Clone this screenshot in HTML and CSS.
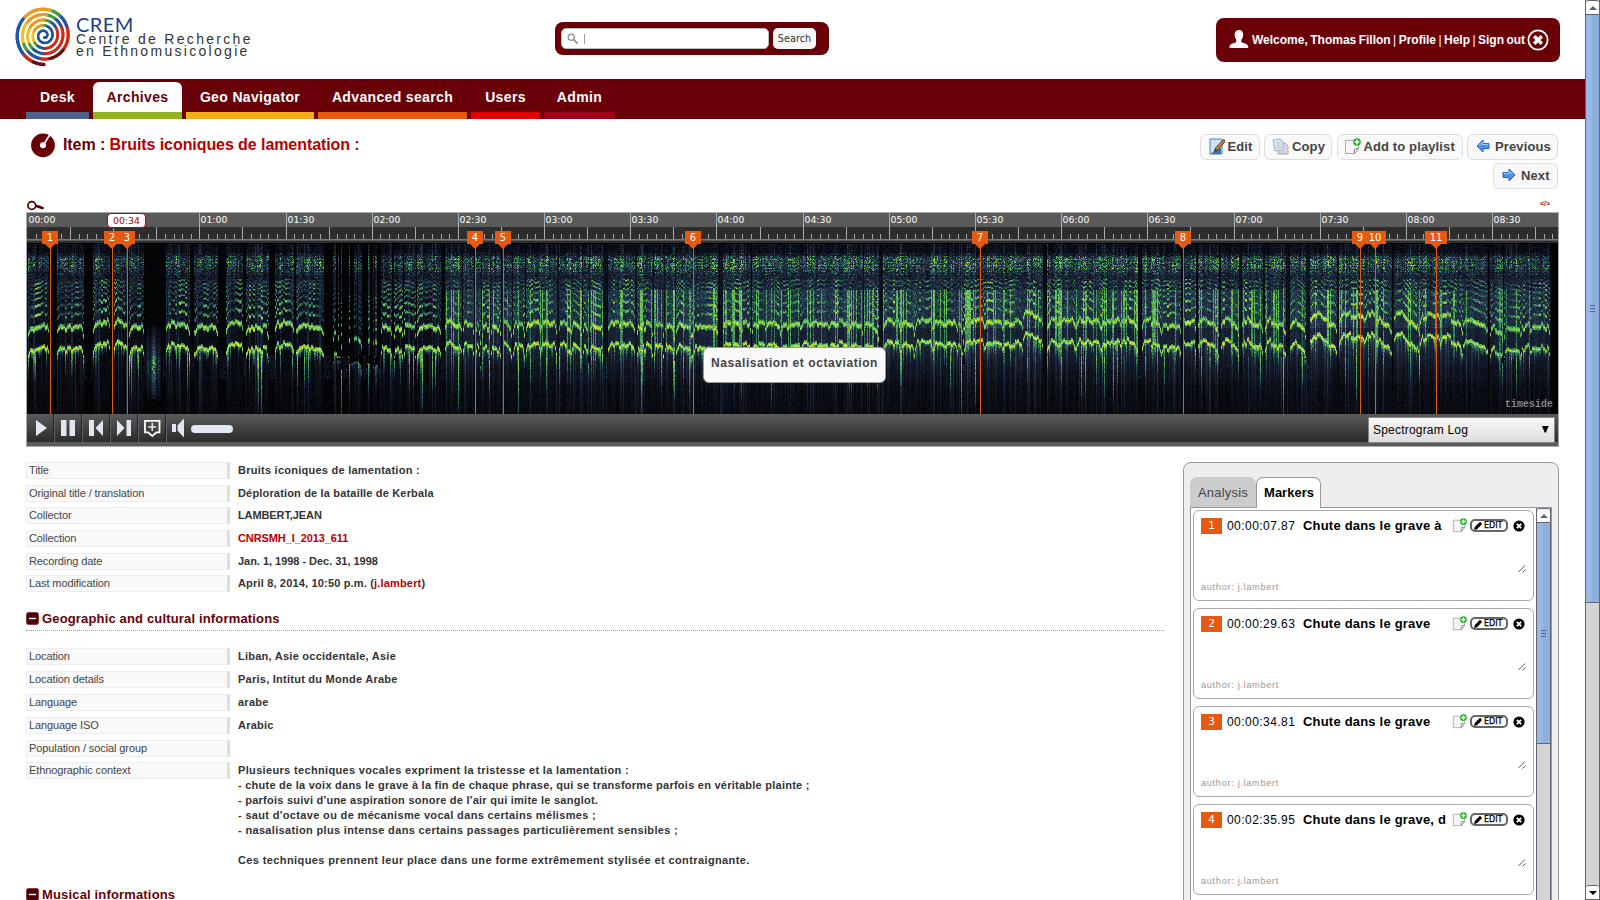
FILE: index.html
```html
<!DOCTYPE html>
<html lang="en">
<head>
<meta charset="utf-8">
<title>Bruits iconiques de lamentation - CREM</title>
<link rel="stylesheet" href="styles.css">
</head>
<body>
<svg class="defs" width="0" height="0" aria-hidden="true">
  <symbol id="i-pageplus" viewBox="0 0 17 17">
    <path d="M1.5 2.5h13v8l-4 5h-9z" fill="#f4f5f4" stroke="#aaa"/>
    <path d="M10.5 15.5v-4.5l4-.5z" fill="#fff" stroke="#888"/>
    <circle cx="13" cy="4" r="3.8" fill="#1fae1f"/>
    <path d="M13 1.6v4.8M10.6 4h4.8" stroke="#fff" stroke-width="1.6"/>
  </symbol>
  <symbol id="i-arrow" viewBox="0 0 14 14">
    <path d="M1 7l6-6v3.5h6v5H7V13z" fill="#4a94ee" stroke="#2a62b8" stroke-width="1"/>
    <path d="M3 6.6L6.2 3.4v2h6" stroke="#a8d0ff" fill="none"/>
  </symbol>
  <symbol id="i-minus" viewBox="0 0 13 13">
    <rect x=".5" y=".5" width="12" height="12" rx="2" fill="#4a0004" stroke="#8c3a3e"/>
    <path d="M3 6.5h7" stroke="#fff" stroke-width="1.4"/>
  </symbol>
</svg>
<div class="page">
  <header class="top">
    <div class="logo">
      <svg id="spiral" width="59" height="60" viewBox="0 0 59 60"></svg>
      <div class="logo-text">
        <div class="crem">CREM</div>
        <div class="sub">Centre de Recherche</div>
        <div class="sub">en Ethnomusicologie</div>
      </div>
    </div>
    <div class="search">
      <div class="search-input">
        <svg width="12" height="12" viewBox="0 0 12 12"><circle cx="4.3" cy="4.3" r="3.1" fill="none" stroke="#999" stroke-width="1.4"/><path d="M6.6 6.6l4 4" stroke="#999" stroke-width="2"/></svg>
        <span class="caret"></span>
      </div>
      <div class="search-btn">Search</div>
    </div>
    <div class="user">
      <svg width="20" height="19" viewBox="0 0 20 19"><path d="M10 0c3 0 4.300 2 4.200 5-.1 2.400-1.200 3.800-1.800 4.800v2.300c1.500 1.300 6.600 1.500 6.800 4.400V18H.5v-1.500c.2-2.900 5.300-3.100 6.800-4.400V9.800C6.700 8.800 5.700 7.400 5.600 5 5.500 2 7 0 10 0z" fill="#fff"/></svg>
      <span class="user-text"><b>Welcome, Thomas Fillon</b> | <b>Profile</b> | <b>Help</b> | <b>Sign out</b></span>
      <svg width="22" height="22" viewBox="0 0 22 22"><circle cx="11" cy="11" r="9.600" fill="none" stroke="#fff" stroke-width="1.800"/><path d="M7.200 7.200l7.600 7.600M14.800 7.200l-7.600 7.600" stroke="#fff" stroke-width="3.400"/></svg>
    </div>
  </header>
  <nav class="nav">
    <a class="tab desk">Desk</a><a class="tab archives">Archives</a><a class="tab geo">Geo Navigator</a><a class="tab adv">Advanced search</a><a class="tab users">Users</a><a class="tab admin">Admin</a>
  </nav>
  <div class="heading">
    <svg width="25" height="25" viewBox="0 0 25 25"><circle cx="12" cy="12.300" r="11.900" fill="#690007"/><path d="M13 11L19 1.500" stroke="#fff" stroke-width="1.500"/><path d="M18 0l5 3" stroke="#fff" stroke-width="1.500"/><circle cx="12" cy="12.300" r="3" fill="#fff"/></svg>
    <h1>Item : <span>Bruits iconiques de lamentation :</span></h1>
    <div class="actions">
      <a class="btn w-edit"><svg width="16" height="17" viewBox="0 0 16 17"><path d="M1 1h12v15H1z" fill="#cfe0f4" stroke="#5a80b8"/><path d="M12 10v6H1z" fill="#3f6cb4"/><path d="M14.800 1.500L7 9.500l-2 4 4-1.800 7-8z" fill="#c98a4a" stroke="#3a2a20" stroke-width="1"/></svg>Edit</a>
      <a class="btn w-copy"><svg width="17" height="17" viewBox="0 0 17 17"><path d="M6 5h7l3 3v8H6z" fill="#d9d4e0" stroke="#aaa3b5"/><path d="M1 2l7-1 3 2.500.5 8.500-8.500 1z" fill="#dde6ee" stroke="#a9b5c2"/><path d="M4 5l5-.6M4.300 7.500l5.500-.6M4.600 10l5.400-.6" stroke="#b4c2d2"/></svg>Copy</a>
      <a class="btn w-add"><svg width="17" height="17"><use href="#i-pageplus"/></svg>Add to playlist</a>
      <a class="btn w-prev"><svg width="14" height="14"><use href="#i-arrow"/></svg>Previous</a>
      <a class="btn w-next"><svg class="flip" width="14" height="14"><use href="#i-arrow"/></svg>Next</a>
    </div>
  </div>
  <div class="player-links">
    <svg width="18" height="11" viewBox="0 0 18 11"><circle cx="4.800" cy="5.500" r="3.900" fill="none" stroke="#4a0004" stroke-width="1.700"/><path d="M9.500 6l6 2" stroke="#4a0004" stroke-width="2.600" stroke-linecap="round"/></svg>
    <span class="embed">&lt;/&gt;</span>
  </div>
  <section class="player">
    <svg id="ruler" class="ruler" width="1531" height="31"></svg>
    <canvas id="spectro" width="1531" height="170"></canvas>
    <div id="marks" class="marks"></div>
    <div class="pointer">00:34</div>
    <div class="brand">timeside</div>
    <div class="tooltip">Nasalisation et octaviation</div>
    <div class="controls">
      <span class="ctl"><svg width="28" height="28"><path d="M9 6l11 8-11 8z" fill="#e2e8f2"/></svg></span>
      <span class="ctl"><svg width="28" height="28"><path d="M6 6h5.500v16H6zM14.500 6H20v16h-5.500z" fill="#e2e8f2"/></svg></span>
      <span class="ctl"><svg width="28" height="28"><path d="M6 6h5v16H6zM20 6v16l-7.500-8z" fill="#e2e8f2"/></svg></span>
      <span class="ctl"><svg width="28" height="28"><path d="M15.500 6H20v16h-4.500zM6 6v16l7.500-8z" fill="#e2e8f2"/></svg></span>
      <span class="ctl"><svg width="28" height="28"><path d="M6 6.800h14.500v11.500h-3l-4.200 3.700-4.300-3.700H6z" fill="none" stroke="#fff" stroke-width="1.800"/><path d="M13.300 9v8M9.300 13h8" stroke="#e2e8f2" stroke-width="1.600"/></svg></span>
      <span class="ctl last"><svg width="22" height="28"><path d="M5 10h4v8H5zM10.500 11.500L17 4.500v19l-6.500-7z" fill="#e2e8f2"/></svg></span>
      <span class="volume"></span>
      <span class="select">Spectrogram Log<svg width="7" height="7"><path d="M0 0h6.600L4 6.500H2.600z" fill="#000"/></svg></span>
    </div>
    <div class="player-foot"></div>
  </section>
  <div class="columns">
    <main class="info">
      <dl>
        <dt>Title</dt><dd>Bruits iconiques de lamentation :</dd>
        <dt>Original title / translation</dt><dd class="mid">Déploration de la bataille de Kerbala</dd>
        <dt>Collector</dt><dd class="caps">LAMBERT,JEAN</dd>
        <dt>Collection</dt><dd class="caps"><a>CNRSMH_I_2013_611</a></dd>
        <dt>Recording date</dt><dd class="date">Jan. 1, 1998 - Dec. 31, 1998</dd>
        <dt>Last modification</dt><dd class="mid">April 8, 2014, 10:50 p.m. (<a>j.lambert</a>)</dd>
      </dl>
      <h2><svg width="13" height="13"><use href="#i-minus"/></svg>Geographic and cultural informations</h2>
      <dl class="second">
        <dt>Location</dt><dd>Liban, Asie occidentale, Asie</dd>
        <dt>Location details</dt><dd>Paris, Intitut du Monde Arabe</dd>
        <dt>Language</dt><dd>arabe</dd>
        <dt>Language ISO</dt><dd>Arabic</dd>
        <dt>Population / social group</dt><dd></dd>
        <dt>Ethnographic context</dt><dd><span class="p1">Plusieurs techniques vocales expriment la tristesse et la lamentation :</span><br>- chute de la voix dans le grave à la fin de chaque phrase, qui se transforme parfois en véritable plainte ;<br>- parfois suivi d'une aspiration sonore de l'air qui imite le sanglot.<br><span class="p1">- saut d'octave ou de mécanisme vocal dans certains mélismes ;</span><br><span class="p1">- nasalisation plus intense dans certains passages particulièrement sensibles ;</span><br><br><span class="p2">Ces techniques prennent leur place dans une forme extrêmement stylisée et contraignante.</span></dd>
      </dl>
      <h2 class="musical"><svg width="13" height="13"><use href="#i-minus"/></svg>Musical informations</h2>
    </main>
    <aside class="side">
      <div class="side-tabs"><span class="st-a">Analysis</span><span class="st-m">Markers</span></div>
      <div class="side-body">
        <div id="cards" class="cards"></div>
        <div class="vbar inner"><span class="vbtn"><i class="up"></i></span><span class="thumb"><i class="grip"></i></span></div>
      </div>
    </aside>
  </div>
</div>
<div class="vbar outer"><span class="vbtn"><i class="up"></i></span><span class="thumb"><i class="grip"></i></span><span class="fill"></span><span class="vbtn"><i class="down"></i></span></div>
<script src="script.js"></script>
</body>
</html>
```

FILE: styles.css
```css
* { box-sizing: border-box; }
html, body { margin: 0; height: 900px; overflow: hidden; }
body { display: flex; background: #fff; font-family: "Liberation Sans", Arial, sans-serif; color: #333; }
svg { display: block; flex: none; }
.defs { position: absolute; }
.page { width: 1585px; height: 900px; overflow: hidden; }

.top { height: 79px; display: flex; align-items: flex-start; }
.logo { width: 555px; padding: 7px 0 0 15px; display: flex; }
.logo-text { padding: 8px 0 0 2px; }
.crem { font: 20px/18px Lato, sans-serif; letter-spacing: .4px; color: #1e3f86; }
.sub { font: 14px/12px "Liberation Sans", sans-serif; letter-spacing: 2.300px; color: #333; white-space: nowrap; }
.search { width: 274px; height: 33px; margin-top: 22px; padding: 6px; display: flex; gap: 4px; background: #690007; border-radius: 8px; }
.search-input { width: 208px; height: 21px; background: #fff; border: 1px solid #bbb; border-radius: 5px; display: flex; align-items: center; padding-left: 5px; gap: 5px; }
.caret { width: 1px; height: 10px; background: #999; }
.search-btn { width: 43px; height: 21px; background: #f8f8f8; border-radius: 5px; font: 9.600px/21px "DejaVu Sans", sans-serif; letter-spacing: .1px; text-align: center; color: #333; }
.user { width: 344px; height: 44px; margin: 18px 0 0 387px; padding: 0 11px 1px 13px; display: flex; align-items: center; background: #690007; border-radius: 8px; color: #fff; }
.user-text { flex: 1; padding-left: 3px; font-size: 12px; word-spacing: -.9px; white-space: nowrap; }

.nav { height: 40px; background: #690007; padding-left: 26px; display: flex; gap: 4px; align-items: flex-end; }
.tab { height: 37px; border-bottom: 7px solid; color: #fff; font: bold 14px/30px "Liberation Sans", sans-serif; letter-spacing: .35px; text-align: center; }
.desk { width: 63px; border-color: #4f628e; }
.archives { width: 89px; border-color: #92b220; background: #fff; color: #690007; border-radius: 6px 6px 0 0; }
.geo { width: 128px; border-color: #f3ad17; }
.adv { width: 149px; border-color: #e65911; }
.users { width: 69px; border-color: #de0000; }
.admin { width: 71px; border-color: #a3001d; }

.heading { height: 81px; padding: 14px 27px 0 31px; display: flex; align-items: flex-start; }
h1 { margin: 3px 0 0 7px; font-size: 16px; line-height: 18px; letter-spacing: -.075px; color: #690007; white-space: nowrap; flex: 1; }
h1 span { color: #b80000; }
.actions { width: 400px; display: flex; flex-wrap: wrap; justify-content: flex-end; gap: 3px 4.500px; padding-top: 1px; }
.btn { height: 26px; border: 1px solid #ddd; border-radius: 6px; background: #f9f9f9; display: flex; align-items: center; padding-left: 8px; gap: 3px; font: bold 13px/24px "Liberation Sans", sans-serif; letter-spacing: .12px; color: #444; white-space: nowrap; }
.btn svg { margin-bottom: 2px; }
.w-edit { width: 60px; } .w-copy { width: 68px; padding-left: 7px; } .w-add { width: 126px; padding-left: 6px; } .w-prev { width: 91px; gap: 5px; } .w-next { width: 65px; gap: 5px; }
.flip { transform: scaleX(-1); }
.player-links { height: 12px; padding: 0 35px 0 27px; display: flex; justify-content: space-between; }
.embed { font: bold 7px/8px "Liberation Sans", sans-serif; color: #7a1a1e; }

.player { width: 1533px; height: 235px; margin-left: 26px; border: 1px solid #aaa; position: relative; }
canvas { display: block; background: #000; width: 1531px; height: 170px; }
.ruler text { font: 9.300px "DejaVu Sans", sans-serif; fill: #fff; }
.marks { position: absolute; left: 0; top: 0; }
.mark { position: absolute; top: 18px; height: 183px; width: 0; }
.mark b { position: absolute; top: 0; height: 13px; background: #e65911; color: #fff; font: 10px/13px "DejaVu Sans", sans-serif; text-align: center; }
.mark i { position: absolute; left: 0; top: 13px; width: 1px; height: 170px; background: #e65911; }
.mark u { position: absolute; left: -5px; top: 13px; border: 5px solid transparent; border-top-color: #e65911; border-bottom: 0; }
.pointer { position: absolute; left: 80px; top: 0; width: 39px; height: 15px; border: 1px solid #b00000; border-radius: 4px; background: #fff; color: #b00000; font: 9.300px/13px "DejaVu Sans", sans-serif; text-align: center; }
.brand { position: absolute; left: 1478px; top: 186px; font: bold 10px/12px "Liberation Mono", monospace; color: #888; }
.tooltip { position: absolute; left: 676px; top: 134px; width: 183px; height: 36px; border: 1px solid #999; border-radius: 6px; background: #f9f9f9; text-align: center; font: bold 12px/30px "Liberation Sans", sans-serif; letter-spacing: .58px; color: #444; white-space: nowrap; }
.controls { height: 28px; background: linear-gradient(#5a5a5a, #2b2b2b); display: flex; align-items: center; }
.ctl { width: 28px; height: 28px; border-right: 1px solid #222; border-left: 1px solid #666; }
.ctl:first-child { width: 27px; border-left: 0; }
.ctl.last { width: 25px; border-right: 0; }
.volume { width: 42px; height: 8px; margin-top: 2px; border-radius: 4px; background: #e2e8f2; }
.select { width: 187px; height: 26px; margin: 3px 3px 0 auto; border: 1px solid #888; background: linear-gradient(#fafafa, #dcdcdc); display: flex; justify-content: space-between; align-items: center; padding: 0 5px 0 4px; font-size: 12px; letter-spacing: .2px; color: #000; position: relative; }
.player-foot { height: 4px; background: #5a5a5a; }

.columns { display: flex; justify-content: space-between; padding: 15px 26px 0 26px; }
.info { width: 1138px; }
dl { margin: 0; display: grid; grid-template-columns: 204px 1fr; column-gap: 8px; row-gap: 5.650px; }
dl.second { row-gap: 5.850px; }
dt { height: 17px; border: 1px solid #eee; border-right: 3px solid #ddd; background: #f9f9f9; font-size: 11px; line-height: 15px; letter-spacing: -.1px; padding-left: 2px; color: #444; }
dd { margin: 0; min-height: 17px; font-size: 11px; line-height: 15px; letter-spacing: .25px; padding-top: 1px; font-weight: bold; color: #333; }
dd a { color: #b80000; }
dd.mid { letter-spacing: .17px; }
dd.caps { letter-spacing: -.1px; }
dd.date { letter-spacing: -.03px; }
.p1 { letter-spacing: .34px; }
.p2 { letter-spacing: .39px; }
h2 { height: 27px; margin: 12px 0 17px; padding-top: 7px; border-bottom: 1px dotted #999; font-size: 13px; line-height: 15px; letter-spacing: .16px; color: #690007; display: flex; gap: 3px; white-space: nowrap; }
h2 svg { margin-top: 1px; }

.side { width: 376px; height: 450px; border: 1px solid #999; border-radius: 8px 8px 0 0; background: #eee; padding: 14px 6px 0; }
.side-tabs { display: flex; height: 30px; font-size: 13px; line-height: 31px; text-align: center; position: relative; z-index: 1; }
.st-a { width: 66px; background: #ccc; border-radius: 7px 7px 0 0; color: #444; letter-spacing: .2px; }
.st-m { width: 65px; height: 31px; background: #fff; border: 1px solid #999; border-bottom: 0; border-radius: 7px 7px 0 0; color: #000; font-weight: bold; padding-left: 1px; line-height: 30px; }
.side-body { height: 420px; background: #fff; border: 1px solid #999; display: flex; justify-content: space-between; padding-left: 2px; }
.cards { width: 341px; padding-top: 2px; }
.card { height: 91px; margin-bottom: 7px; border: 1px solid #aaa; border-radius: 6px; padding: 7px 7px 0 7px; }
.row { height: 16px; display: flex; align-items: center; white-space: nowrap; }
.num { width: 21px; height: 16px; background: #e65911; color: #fff; font: 10.500px/14px "DejaVu Sans", sans-serif; text-align: center; }
.time { width: 76px; padding-left: 5px; font-size: 12px; letter-spacing: .45px; color: #000; margin-bottom: 1px; }
.name { width: 154px; padding-left: 5px; font-size: 13px; font-weight: bold; letter-spacing: .2px; color: #000; margin-bottom: 1px; }
.row svg { margin-bottom: 1px; }
.edit { width: 38px; height: 13px; margin: 0 5px 1px 3px; border: 2px solid #666; border-radius: 5px; display: flex; align-items: center; gap: 1px; padding-left: 2px; font: 8px/9px "DejaVu Sans", sans-serif; color: #000; -webkit-text-stroke: .25px #000; }
.row .edit svg { margin: 0; }
.resize { display: flex; justify-content: flex-end; padding: 31px 0 0; height: 40px; }
.author { margin-top: 7px; font-size: 9.300px; line-height: 12px; letter-spacing: .64px; color: #999; }

.vbar { width: 15px; background: #d6d4d2; border: 1px solid #60656f; border-width: 0 1px; display: flex; flex-direction: column; }
.vbtn { height: 15px; flex: none; background: #fff; border: 1px solid #60656f; border-width: 1px 0; border-radius: 3px 3px 0 0; display: flex; align-items: center; justify-content: center; }
.up { border: 4px solid transparent; border-top: 0; border-bottom-color: #60656f; }
.down { border: 4px solid transparent; border-bottom: 0; border-top-color: #000; }
.thumb { background: linear-gradient(90deg, #98b8e6 50%, #8eaedc 50%); border-bottom: 1px solid #60656f; display: flex; align-items: center; justify-content: center; }
.grip { width: 5px; height: 7px; background: repeating-linear-gradient(#4c6488 0 1px, transparent 1px 3px); }
.inner { border-top: 0; }
.inner .thumb { height: 221px; }
.outer { height: 900px; }
.outer .thumb { height: 588px; }
.fill { flex: 1; }
```

FILE: script.js
```js
const NS = 'http://www.w3.org/2000/svg';
function el(parent, name, attrs, text) {
  const e = document.createElementNS(NS, name);
  for (const k in attrs) e.setAttribute(k, attrs[k]);
  if (text) e.textContent = text;
  parent.appendChild(e);
  return e;
}

// Logo: coloured spiral, unwinding counter-clockwise and ending at the bottom
(function () {
  const s = document.getElementById('spiral');
  const turns = 5, steps = 240;
  const blue = '#2456a0', green = '#4a9c3c', yellow = '#f0c028', orange = '#ee9a1c', red = '#cc2c18', dark = '#6a0c10';
  let px, py;
  for (let i = 0; i <= steps; i++) {
    const t = i / steps, a = Math.PI / 2 + (1 - t) * turns * 2 * Math.PI, r = 2 + t * 27;
    const x = 29 + Math.cos(a) * r * 0.97, y = 28.5 + Math.sin(a) * r;
    if (i) {
      const q = (((a / (2 * Math.PI)) + (1 - t) * 0.12) % 1 + 1) % 1;
      let c = q < 0.1 ? red : q < 0.22 ? (t > .75 ? dark : red) : q < 0.28 ? red : q < 0.4 ? blue : q < 0.46 ? green : q < 0.6 ? yellow : q < 0.8 ? orange : q < 0.86 ? green : q < 0.95 ? blue : red;
      if (t < 0.3) c = blue;
      if (t > .93) c = q < .3 ? dark : q < .36 ? red : blue;
      el(s, 'path', { d: `M${px} ${py}L${x} ${y}`, stroke: c, 'stroke-width': 2.2 + t * 1.2, 'stroke-linecap': 'round' });
    }
    px = x; py = y;
  }
})();

// Time ruler
(function () {
  const r = document.getElementById('ruler');
  el(r, 'rect', { width: 1531, height: 14, fill: '#5a5a5a' });
  el(r, 'rect', { y: 14, width: 1531, height: 17, fill: '#2e2e2e' });
  el(r, 'rect', { y: 26, width: 1531, height: 1.6, fill: '#777' });
  el(r, 'rect', { y: 30, width: 1531, height: 1, fill: '#000' });
  for (let i = 1; i < 178; i++) {
    const x = Math.round(i * 8.618);
    if (x > 1530) break;
    const y = i % 10 === 0 ? 0 : i % 5 === 0 ? 14 : 21;
    el(r, 'rect', { x: x, y: y, width: 1, height: 26 - y, fill: '#aaa' });
  }
  for (let i = 0; i < 18; i++) {
    const t = String(Math.floor(i / 2)).padStart(2, '0') + ':' + (i % 2 ? '30' : '00');
    el(r, 'text', { x: Math.round(i * 86.18) + 1.5, y: 10 }, t);
  }
})();

// Marker flags: [line x, box left, box width]
(function () {
  const m = document.getElementById('marks');
  [[23, -8, 16], [85, -8, 16], [100, -8, 16], [448, -8, 16], [476, -8, 16], [666, -8, 16], [953, -8, 16], [1156, -8, 16], [1333, -8, 16], [1348, -11, 22], [1409, -11, 22]].forEach(function (p, i) {
    const d = document.createElement('div');
    d.className = 'mark';
    d.style.left = p[0] + 'px';
    d.innerHTML = `<b style="left:${p[1]}px;width:${p[2]}px">${i + 1}</b><u></u><i></i>`;
    m.appendChild(d);
  });
})();

// Marker cards
(function () {
  const c = document.getElementById('cards');
  [['00:00:07.87', 'Chute dans le grave à'], ['00:00:29.63', 'Chute dans le grave'], ['00:00:34.81', 'Chute dans le grave'], ['00:02:35.95', 'Chute dans le grave, d']].forEach(function (p, i) {
    const d = document.createElement('div');
    d.className = 'card';
    d.innerHTML = `<div class="row"><span class="num">${i + 1}</span><span class="time">${p[0]}</span><span class="name">${p[1]}</span>
      <svg width="15" height="15"><use href="#i-pageplus"/></svg>
      <span class="edit"><svg width="9" height="9" viewBox="0 0 9 9"><path d="M0 9l.8-3L6 .8 8.200 3 3 8.200z"/></svg>EDIT</span>
      <svg width="12" height="12" viewBox="0 0 12 12"><circle cx="6" cy="6" r="5.600"/><path d="M3.800 3.800l4.400 4.400M8.200 3.800l-4.400 4.400" stroke="#fff" stroke-width="1.800"/></svg></div>
      <div class="resize"><svg width="8" height="8"><path d="M.5 7L7 .5M4.500 7.500L7.500 4.500" stroke="#555" stroke-width="1"/></svg></div>
      <div class="author">author: j.lambert</div>`;
    c.appendChild(d);
  });
})();

// Log-frequency spectrogram
(function () {
  const W = 1531, H = 170;
  const ctx = document.getElementById('spectro').getContext('2d');
  const img = ctx.createImageData(W, H);
  // voiced phrases: start, end, fundamental y at start and end, strength
  const S = [[28,48,106,104,1],[57,83,105,106,1],[93,109,101,100,1],[114,127,98,106,1],[129,143,106,105,1],
    [166,189,101,105,1],[194,217,105,105,1],[226,242,101,102,1],[246,268,105,106,1],[275,293,101,101,1],[296,323,103,106,1],
    [333,341,112,118,.6],[346,361,117,119,.55],[366,370,115,118,.5],[373,378,117,118,.5],
    [381,391,104,106,.9],[394,402,107,104,.9],[404,415,103,106,.9],[417,440,105,104,1],
    [445,461,99,103,1],[463,473,102,105,1],[476,480,101,112,.9],[482,489,105,105,.9],[491,500,103,106,1],[503,511,101,106,.9],[513,524,102,106,1],[526,540,101,99,1],
    [541,556,99,104,1],[559,571,102,105,1],[572,581,101,106,1],[583,588,101,112,.9],[590,602,101,106,1],[608,634,101,102,1],
    [637,644,104,103,1],[645,652,101,106,1],[654,663,102,106,1],[665,674,102,106,1],[676,691,103,106,1],[692,717,105,104,1],
    [723,731,100,100,1],[732,741,100,103,1],[742,750,101,103,1],[752,765,101,102,1],[766,780,101,104,1],[781,800,103,101,1],[801,828,101,101,1],[829,848,101,101,1],[849,862,101,105,1],[864,878,102,108,1],
    [883,900,99,99,1],[901,914,99,103,1],[915,932,100,99,1],[933,956,100,100,1],[957,963,102,110,.8],[964,984,97,98,1],[985,1002,98,99,1],[1003,1022,99,101,1],[1023,1042,90,97,1],
    [1047,1075,99,98,1],[1076,1100,98,99,1],[1101,1120,99,97,1],[1121,1137,97,100,1],[1142,1160,99,99,1],[1161,1180,105,104,1],[1183,1195,99,99,1],[1198,1218,98,105,1],
    [1221,1238,98,104,1],[1242,1262,98,104,1],[1265,1285,99,106,1],[1290,1305,99,106,1],
    [1310,1336,92,104,1.1],[1339,1364,92,94,1.1],[1364,1391,92,106,1],[1394,1419,92,106,1.1],[1420,1440,94,94,1],[1440,1462,93,104,1],[1463,1487,98,104,.9],
    [1490,1502,106,109,.8],[1504,1520,108,106,.8],[1521,1530,106,101,.8],[1531,1549,104,105,.8]];
  function hash(x, y) {
    let h = Math.imul(x | 0, 374761393) + Math.imul(y | 0, 668265263);
    h = Math.imul(h ^ (h >>> 13), 1274126177);
    return ((h ^ (h >>> 16)) >>> 0) / 4294967296;
  }
  const stops = [[0, 0, 0, 0], [.18, 20, 26, 40], [.35, 34, 50, 76], [.5, 46, 104, 86], [.66, 86, 184, 92], [.82, 160, 216, 62], [1, 230, 228, 50]];
  function colour(v) {
    if (v <= 0) return [0, 0, 0];
    if (v > 1) v = 1;
    for (let i = 1; i < stops.length; i++) if (v <= stops[i][0]) {
      const a = stops[i - 1], b = stops[i], k = (v - a[0]) / (b[0] - a[0]);
      return [a[1] + (b[1] - a[1]) * k, a[2] + (b[2] - a[2]) * k, a[3] + (b[3] - a[3]) * k];
    }
    return [230, 228, 50];
  }
  for (let x = 0; x < W; x++) {
    const X = x + 27;
    let seg = null;
    for (const s of S) if (X >= s[0] && X <= s[1]) { seg = s; break; }
    const c1 = hash(x, 1001), c2 = hash(x >> 1, 2002), c3 = hash(x >> 2, 3003), c4 = hash(x >> 3, 4004);
    const late = X > 440;
    let f = 0, st = 0, onset = false;
    if (seg) {
      const t = (X - seg[0]) / (seg[1] - seg[0]);
      f = seg[2] + (seg[3] - seg[2]) * Math.max(0, t - .3) / .7 + (c2 - .5) * 4 + (c3 - .5) * 3;
      if (t < .1) f += (0.1 - t) * 60;
      if (t > .92) f += (t - .92) * 80;
      st = seg[4];
      onset = c1 * .6 + c3 * .4 > .7;
    }
    const colGain = .5 + .5 * c1 + .3 * (c3 - .3);
    for (let y = 0; y < H; y++) {
      const n = hash(x, y), n2 = hash(x >> 1, y + 500);
      let v = 0;
      if (seg) {
        // upper noise band, fading smoothly at both ends
        if (y < 46) {
          const env = y < 9 ? .2 : y < 14 ? .3 + (y - 9) * .07 : y < 22 ? .62 : y < 32 ? .62 - (y - 22) * .03 : .32;
          v = env * (.15 + 1.05 * n) * colGain * (y % 3 === 0 ? 1.150 : .9);
          if (late && y > 12) v += .05;
          if (n2 > .9 && y > 12 && y < 34) v += .14;
        } else if (y < 112) {
          v = (late ? .13 : .02) + .14 * n + (late ? .22 * c1 * c3 : 0);
          if (onset) v += (late ? .14 : .08) + .16 * n2;
          if (y < 84) v += .08 * n + (late ? .05 : 0);
        }
        if (y > 34 && y < 114) {
          // harmonic partials, one octave every 22 rows
          const k = Math.pow(2, (f - y) / 22), nk = Math.round(k);
          if (nk >= 1) {
            const d = Math.abs(y - (f - 22 * Math.log2(nk)));
            const amp = nk < 3 ? 1.12 : nk < 5 ? .95 : nk < 9 ? .84 : .5;
            const w = nk < 3 ? 2.900 : nk < 5 ? 1.700 : 1.100;
            if (d < w) v = Math.max(v, amp * (1 - d / w * .42) * (.66 + .36 * n) * (nk > 2 ? .35 + .45 * c2 + .4 * c4 : nk === 2 ? .82 + .2 * c2 : 1));
          }
        }
        // decay below the fundamental
        if (y > f + 1) {
          const depth = 3 + c1 * c1 * c2 * 30 + (onset ? 7 : 0) + (c1 > .965 ? 26 : 0), q = (y - f) / depth;
          const base = n * .1 + (c1 > .65 ? .17 : .03) * Math.max(0, 1 - (y - 105) / 70) + (late ? .13 * Math.max(0, 1 - (y - 108) / 34) : 0);
          v = q <= 1 ? Math.max(base, (.82 - q * .5) * (.62 + .4 * n)) : base;
        }
        v *= .55 + .45 * st;
        if (st < .7 && y < f - 3) v *= c1 > .55 ? 1.100 : .12;
      } else {
        v = n * .06 + (late ? .07 * c1 : 0) + (y > 110 && y < 135 && c3 > .3 ? .14 * n : 0);
        if (late && y > 10 && y < 112) v += .12 * n * c1;
        if (X > 143 && X < 161 && y > 80 && y < 155) v = Math.max(v, (.78 - Math.abs(y - 120) / 60) * (1 - Math.abs(X - 152) / 14) * (.35 + c1 * .8) * (.5 + .6 * n2));
        if (X > 1550) v = 0;
      }
      if (X < 1550) {
        if (c1 > .9) v += y > 112 ? .14 * (1 - (y - 115) / 150) : y < 10 && seg ? .15 : 0;
        if (y > 130 && late) v += .04 * c2;
      }
      const c = colour(v), o = (y * W + x) * 4;
      img.data[o] = c[0]; img.data[o + 1] = c[1]; img.data[o + 2] = c[2]; img.data[o + 3] = 255;
    }
  }
  ctx.putImageData(img, 0, 0);
})();
```
